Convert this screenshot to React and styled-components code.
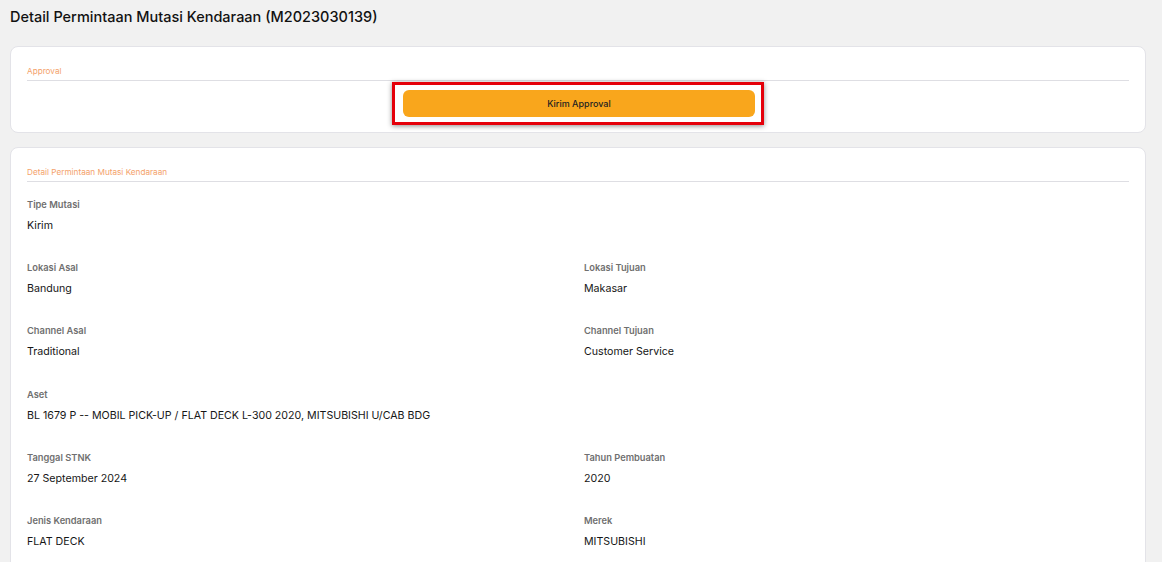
import React from 'react'
import styled, { createGlobalStyle } from 'styled-components'

const GlobalStyle = createGlobalStyle`
  body {
    margin: 0;
    background: #f1f1f1;
    font-family: Inter, "Noto Sans", sans-serif;
    color: #111;
  }
`

const fields = [
  [{ label: 'Tipe Mutasi', value: 'Kirim' }],
  [{ label: 'Lokasi Asal', value: 'Bandung' }, { label: 'Lokasi Tujuan', value: 'Makasar' }],
  [{ label: 'Channel Asal', value: 'Traditional' }, { label: 'Channel Tujuan', value: 'Customer Service' }],
  [{ label: 'Aset', value: 'BL 1679 P -- MOBIL PICK-UP / FLAT DECK L-300 2020, MITSUBISHI U/CAB BDG', wide: true }],
  [{ label: 'Tanggal STNK', value: '27 September 2024' }, { label: 'Tahun Pembuatan', value: '2020' }],
  [{ label: 'Jenis Kendaraan', value: 'FLAT DECK' }, { label: 'Merek', value: 'MITSUBISHI' }],
]

const App = () => (
  <Page>
    <GlobalStyle />
    <Title>Detail Permintaan Mutasi Kendaraan (M2023030139)</Title>
    <Card>
      <Legend>Approval</Legend>
      <ButtonRow>
        <Highlight>
          <ApproveButton>Kirim Approval</ApproveButton>
        </Highlight>
      </ButtonRow>
    </Card>
    <Card>
      <Legend>Detail Permintaan Mutasi Kendaraan</Legend>
      <Grid>
        {fields.map((row, i) => (
          <React.Fragment key={i}>
            {row.map(f => (
              <Field key={f.label} $wide={f.wide}>
                <Label>{f.label}</Label>
                <Value>{f.value}</Value>
              </Field>
            ))}
            {row.length === 1 && !row[0].wide && <Field />}
          </React.Fragment>
        ))}
      </Grid>
    </Card>
  </Page>
)

export default App

const Page = styled.div`
  padding: 7px 16px 0 10px;
  display: flex;
  flex-direction: column;
  gap: 14px;
  height: 555px;
  overflow: hidden;
`

const Title = styled.h1`
  margin: 0 0 5px;
  font-size: 14.5px;
  line-height: 20px;
  font-weight: 500;
  color: #111;
`

const Card = styled.div`
  background: #fff;
  border: 1px solid #e3e3e8;
  border-radius: 8px;
  padding: 18px 16px 7px 16px;
  flex-shrink: 0;
`

const Legend = styled.div`
  font-size: 8.2px;
  line-height: 12px;
  color: #f4a26b;
  padding-bottom: 3px;
  border-bottom: 1px solid #dedee3;
`

const ButtonRow = styled.div`
  display: flex;
  justify-content: center;
  margin-top: 1px;
`

const Highlight = styled.div`
  width: 32%;
  padding: 5px 6px 5px 8px;
  border: 3px solid #e5000a;
  box-shadow: 0 1px 5px rgba(0, 0, 0, 0.45);
`

const ApproveButton = styled.button`
  display: block;
  width: 100%;
  height: 27px;
  border: none;
  border-radius: 6px;
  background: #f9a61c;
  color: #222;
  font-family: Inter, "Noto Sans", sans-serif;
  font-size: 9px;
  font-weight: 500;
  cursor: pointer;
`

const Grid = styled.div`
  display: grid;
  grid-template-columns: 1fr 1fr;
  column-gap: 12px;
  padding-top: 16px;
`

const Field = styled.div`
  grid-column: ${p => (p.$wide ? '1 / -1' : 'auto')};
  height: 63.2px;
`

const Label = styled.div`
  font-size: 9.3px;
  line-height: 14px;
  font-weight: 600;
  color: #707070;
`

const Value = styled.div`
  margin-top: 6px;
  font-size: 10.65px;
  line-height: 16px;
  color: #161616;
`
